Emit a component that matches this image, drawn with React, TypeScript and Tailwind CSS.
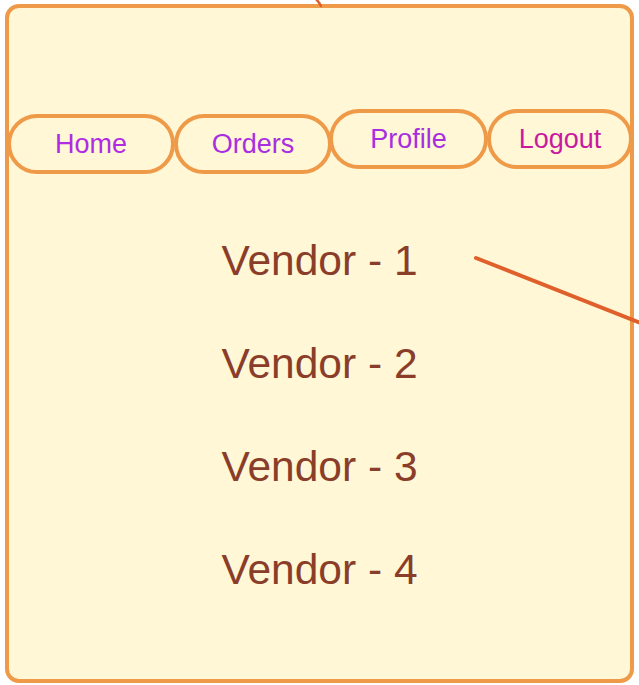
const navItems = [
  { label: "Home", width: "w-[168px] -ml-[2px]", color: "text-[#b12be3]", offset: "mt-[5px]" },
  { label: "Orders", width: "w-[158px] -ml-[1px]", color: "text-[#a82ee0]", offset: "mt-[5px]" },
  { label: "Profile", width: "w-[159px] -ml-[3px]", color: "text-[#a62fe0]", offset: "" },
  { label: "Logout", width: "w-[146px] -ml-[1px]", color: "text-[#c81aa0]", offset: "" },
];

const vendors = ["Vendor - 1", "Vendor - 2", "Vendor - 3", "Vendor - 4"];

export default function App() {
  return (
    <div className="relative w-[639px] h-[685px] bg-white overflow-hidden font-['Liberation_Sans',Arial,sans-serif]">
      {/* Frame */}
      <div className="ml-[5px] mt-[4px] w-[629px] h-[679px] border-4 border-[#ee9a48] rounded-[14px] bg-[#fff7d6]">
        {/* Nav */}
        <div className="flex items-start pt-[101px]">
          {navItems.map((item) => (
            <div
              key={item.label}
              className={`${item.width} ${item.offset} shrink-0 h-[60px] border-[4.5px] border-[#ee9a48] rounded-[30px] flex items-center justify-center text-[27px] ${item.color}`}
            >
              {item.label}
            </div>
          ))}
        </div>

        {/* Vendors */}
        <div className="mt-[35px] flex flex-col items-center">
          {vendors.map((v) => (
            <div key={v} className="text-[42.5px] leading-[103px] text-[#8a3e29]">
              {v}
            </div>
          ))}
        </div>
      </div>

      {/* Connector lines drawn over the frame */}
      <svg className="absolute inset-0 pointer-events-none" width="639" height="685" viewBox="0 0 639 685">
        <line x1="476" y1="258" x2="648" y2="326" stroke="#e0602c" strokeWidth="4" strokeLinecap="round" />
        <path d="M315 -2 Q319 2 321 6" fill="none" stroke="#e0602c" strokeWidth="2.5" strokeLinecap="round" />
      </svg>
    </div>
  );
}
